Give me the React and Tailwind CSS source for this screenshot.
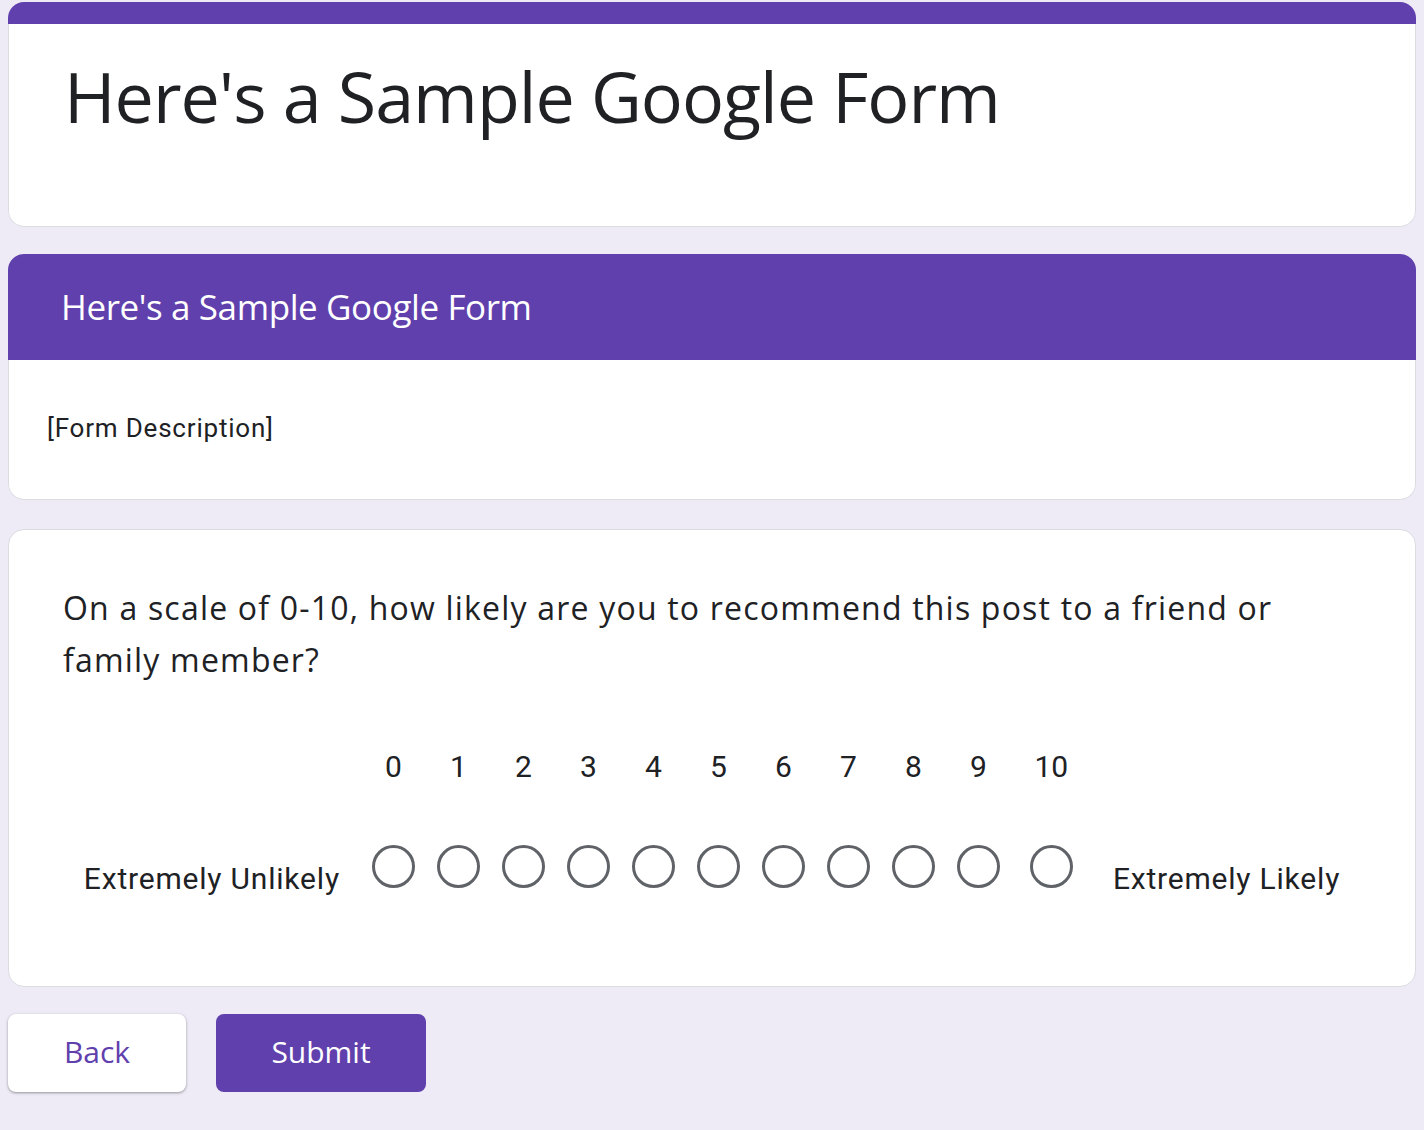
import React from "react";

const gs = { fontFamily: '"Open Sans", "Noto Sans", sans-serif' };
const rb = { fontFamily: 'Roboto, "Liberation Sans", sans-serif' };

export default function App() {
  const nums = [0, 1, 2, 3, 4, 5, 6, 7, 8, 9, 10];
  return (
    <div className="min-h-[1130px] bg-[#eeeaf6] px-2 pt-[2px] text-[#202124]">
      {/* Title card */}
      <div className="rounded-2xl overflow-hidden">
        <div className="h-[22px] bg-[#6040ad]" />
        <div className="h-[203px] bg-white border-x border-b border-[#dadce0] rounded-b-2xl pl-[55px] pt-[27px]">
          <h1 className="text-[70px] leading-[90px] tracking-[-1px]" style={gs}>
            Here's a Sample Google Form
          </h1>
        </div>
      </div>

      {/* Section card */}
      <div className="mt-[27px] rounded-2xl overflow-hidden">
        <div className="h-[106px] bg-[#6040ad] flex items-center pl-[53px]">
          <div className="text-white text-[35px] leading-[46px] tracking-[-0.4px]" style={gs}>
            Here's a Sample Google Form
          </div>
        </div>
        <div className="h-[140px] bg-white border-x border-b border-[#dadce0] rounded-b-2xl pl-[38px] pt-[52px]">
          <div className="text-[26px] leading-[32px] tracking-[0.8px]" style={rb}>[Form Description]</div>
        </div>
      </div>

      {/* Question card */}
      <div className="mt-[29px] bg-white border border-[#dadce0] rounded-2xl pt-[52px] pb-[89px]">
        <div className="pl-[54px] pr-[120px] text-[32px] leading-[52px] tracking-[1.2px]" style={gs}>
          On a scale of 0-10, how likely are you to recommend this post to a friend or family member?
        </div>
        <div className="mt-[61px] flex justify-center items-start" style={rb}>
          <div className="flex flex-col pr-[21px]">
            <div className="h-[40px]" />
            <div className="mt-[74px] text-[30px] leading-[36px] tracking-[0.8px] whitespace-nowrap">Extremely Unlikely</div>
          </div>
          {nums.map((n) => (
            <div key={n} className={`flex flex-col items-center ${n === 10 ? "w-[81px]" : "w-[65px]"}`}>
              <div className="h-[40px] text-[30px] leading-[40px]">{n}</div>
              <div className="mt-[58px] w-[43px] h-[43px] rounded-full border-[3px] border-[#5f6368]" />
            </div>
          ))}
          <div className="flex flex-col pl-[21px]">
            <div className="h-[40px]" />
            <div className="mt-[74px] text-[30px] leading-[36px] tracking-[0.8px] whitespace-nowrap">Extremely Likely</div>
          </div>
        </div>
      </div>

      {/* Buttons */}
      <div className="mt-[27px] flex gap-[30px]">
        <button className="w-[178px] h-[78px] pb-[4px] bg-white rounded-lg shadow-[0_1px_3px_rgba(60,64,67,0.35),0_1px_2px_rgba(60,64,67,0.2)] text-[#6040ad] text-[30px]" style={gs}>
          Back
        </button>
        <button className="w-[210px] h-[78px] pb-[4px] bg-[#6040ad] rounded-lg text-white text-[30px]" style={gs}>
          Submit
        </button>
      </div>
    </div>
  );
}
